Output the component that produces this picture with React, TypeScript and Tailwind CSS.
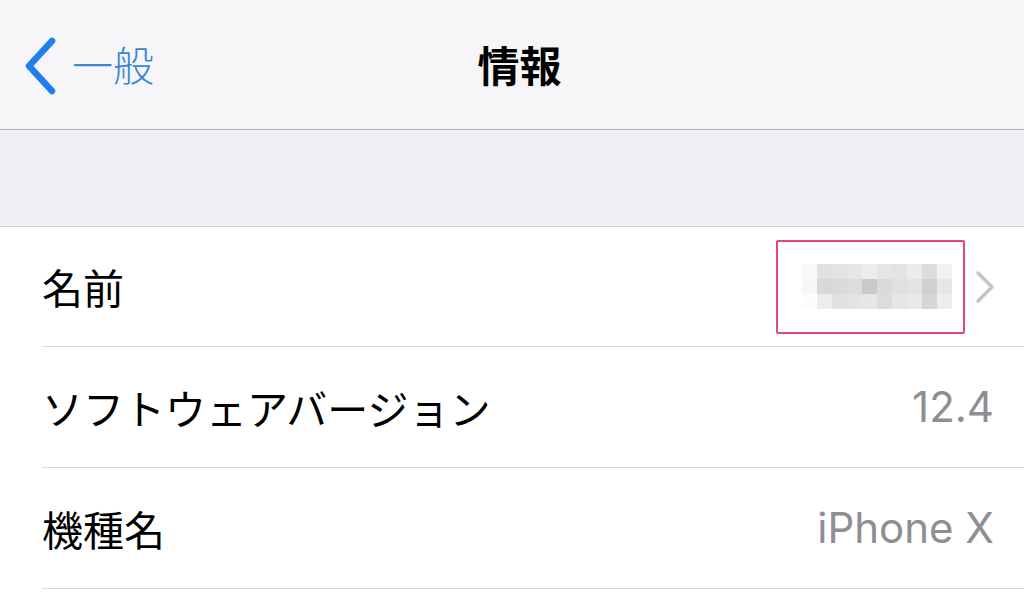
import React from "react";

const jp = { fontFamily: '"Noto Sans CJK JP", "Noto Sans", sans-serif' };
const latin = { fontFamily: 'Inter, "Noto Sans CJK JP", sans-serif' };

const blur: string[][] = [
  ["#f8f8f8", "#e1e1e1", "#e3e3e3", "#e6e6e6", "#ededed", "#e5e5e5", "#e3e3e3", "#ebebeb", "#dcdcdc", "#f1f1f1"],
  ["#f7f7f7", "#d8d8d8", "#d9d9d9", "#dcdcdc", "#c9c9c9", "#dadada", "#e0e0e0", "#e3e3e3", "#d0d0d0", "#e7e7e7"],
  ["#fcfcfc", "#ededed", "#e1e1e1", "#e4e4e4", "#e7e7e7", "#dcdcdc", "#e5e5e5", "#e9e9e9", "#d6d6d6", "#ededed"],
];

function Row({ label, children, first }: { label: string; children: React.ReactNode; first?: boolean }) {
  return (
    <div className="pl-[42px]">
      <div
        className={`flex items-center justify-between border-b border-[#d9d9dc] pr-[30px] ${first ? "h-[120px]" : "h-[121px]"}`}
      >
        <span className="text-[41px] leading-none text-black" style={jp}>
          {label}
        </span>
        {children}
      </div>
    </div>
  );
}

export default function App() {
  return (
    <div className="w-[1024px] h-[605px] overflow-hidden bg-white">
      {/* Nav bar */}
      <div className="h-[130px] bg-[#f6f6f8] border-b border-[#b1b1b4] flex items-center">
        <div className="flex-1 flex items-center pl-[25px]">
          <svg width="32" height="58" viewBox="0 0 32 58" className="mt-[2px]">
            <polyline
              points="27,4 4,29 27,54"
              fill="none"
              stroke="#1f7ef0"
              strokeWidth="6.5"
              strokeLinecap="round"
              strokeLinejoin="round"
            />
          </svg>
          <span className="ml-[15px] text-[41px] leading-none text-[#3a86d6] font-light -mt-[2px]" style={jp}>
            一般
          </span>
        </div>
        <div className="text-[42px] font-bold leading-none text-black -ml-[10px] -mt-[2px]" style={jp}>
          情報
        </div>
        <div className="flex-1" />
      </div>

      {/* Gray spacer */}
      <div className="h-[97px] bg-[#efeff4] border-b border-[#d0d0d4]" />

      {/* Rows */}
      <Row label="名前" first>
        <div className="flex items-center">
          <div className="relative w-[189px] h-[94px] border-2 border-[#e2467c] rounded-[2px] -mr-[10px]">
            <div className="absolute left-[24px] top-[22px] flex flex-col">
              {blur.map((r, i) => (
                <div key={i} className="flex">
                  {r.map((c, j) => (
                    <div key={j} className="w-[15px] h-[15px]" style={{ backgroundColor: c }} />
                  ))}
                </div>
              ))}
            </div>
          </div>
          <svg width="24" height="36" viewBox="0 0 24 36" className="ml-[18px] -mr-[3px]">
            <polyline
              points="5,4 19,18 5,32"
              fill="none"
              stroke="#c4c4c8"
              strokeWidth="3.5"
              strokeLinecap="round"
              strokeLinejoin="round"
            />
          </svg>
        </div>
      </Row>
      <Row label="ソフトウェアバージョン">
        <span className="text-[42px] leading-none text-[#8e8e93]" style={latin}>
          12.4
        </span>
      </Row>
      <Row label="機種名">
        <span className="text-[42px] leading-none text-[#8e8e93]" style={latin}>
          iPhone X
        </span>
      </Row>
    </div>
  );
}
